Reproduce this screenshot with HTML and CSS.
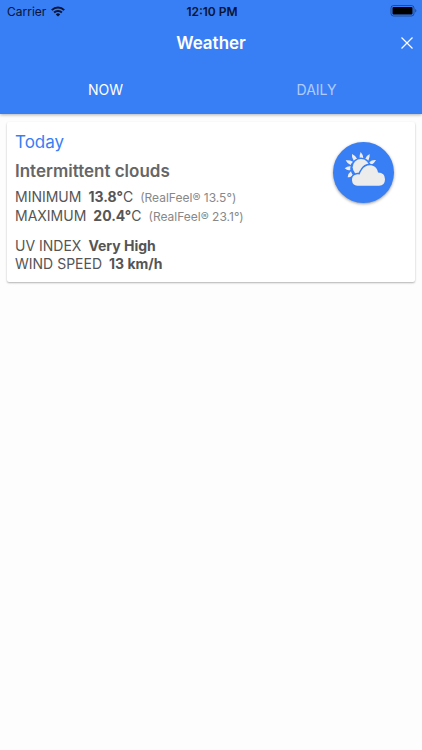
FILE: index.html
```html
<!DOCTYPE html>
<html lang="en">
<head>
<meta charset="utf-8">
<meta name="viewport" content="width=device-width, initial-scale=1">
<title>Weather</title>
<link rel="stylesheet" href="styles.css">
</head>
<body>
<header class="header">
  <div class="status">
    <div class="carrier">
      <span>Carrier</span>
      <svg class="wifi" viewBox="0 0 14 11" aria-hidden="true">
        <path d="M.8 4.100a8.800 8.800 0 0 1 12.400 0M3.100 6.500a5.600 5.600 0 0 1 7.800 0" fill="none" stroke="currentColor" stroke-width="2"/>
        <path d="M4.800 8.400a3.200 3.200 0 0 1 4.400 0L7 10.600z" fill="currentColor"/>
      </svg>
    </div>
    <span class="time">12:10 PM</span>
    <svg class="battery" viewBox="0 0 27 12" aria-hidden="true">
      <rect x="1" y=".5" width="23" height="10.500" rx="2.600" fill="none" stroke="#000" stroke-opacity=".4"/>
      <rect x="2.500" y="2" width="20" height="7.500" rx="1" fill="#000"/>
      <path d="M25.200 4v3.600c1.600-.6 1.600-3 0-3.600z" fill="#000" fill-opacity=".4"/>
    </svg>
  </div>
  <div class="titlebar">
    <h1 class="title">Weather</h1>
    <button class="close" type="button" aria-label="Close">
      <svg viewBox="0 0 12 12" aria-hidden="true"><path d="M.5.5l11 11M11.500.5l-11 11" fill="none" stroke="currentColor" stroke-width="1.200"/></svg>
    </button>
  </div>
  <nav class="tabs">
    <button class="tab tab-active" type="button">NOW</button>
    <button class="tab" type="button">DAILY</button>
  </nav>
</header>
<main class="content">
  <article class="card">
    <div class="details">
      <h2 class="day">Today</h2>
      <p class="summary">Intermittent clouds</p>
      <div class="group">
        <p class="row"><span>MINIMUM</span><span><b>13.8°</b>C</span><small>(RealFeel® 13.5°)</small></p>
        <p class="row"><span>MAXIMUM</span><span><b>20.4°</b>C</span><small>(RealFeel® 23.1°)</small></p>
      </div>
      <div class="group">
        <p class="row"><span>UV INDEX</span><b>Very High</b></p>
        <p class="row"><span>WIND SPEED</span><b>13 km/h</b></p>
      </div>
    </div>
    <svg class="icon" viewBox="39 36 183 183" aria-hidden="true">
      <g fill="#ececec">
        <circle cx="123" cy="112" r="25"/>
        <path d="M119 83q-1-8 3-17q8 9 8 18q-5-2-11-1z"/>
        <path d="M136 86q3-9 13-14q1 11-4 20q-3-4-9-6z"/>
        <path d="M148 97q7-8 20-7q-5 10-15 15q-2-5-5-8z"/>
        <path d="M101 92q-7-9-5-20q11 5 15 14q-6 2-10 6z"/>
        <path d="M92 105q-10-3-15-14q12-1 22 4q-5 4-7 10z"/>
        <path d="M91 120q-8 3-17-5q9-7 18-6q-2 5-1 11z"/>
        <path d="M98 134q-4 8-15 8q1-12 10-18q1 6 5 10z"/>
      </g>
      <path d="M112 167a17 17 0 0 1-3-33.500q4-1 10 0q2-7 7-14c12-20 44-18 48 8q21 1 21 20q0 18-18 19.500z" fill="#ececec" stroke="#387ef5" stroke-width="9" paint-order="stroke"/>
    </svg>
  </article>
</main>
</body>
</html>
```
FILE: styles.css
```css
* {
  box-sizing: border-box;
}

body {
  margin: 0;
  background: #fdfdfd;
  color: #555;
  font-family: Inter, "Liberation Sans", sans-serif;
  font-size: 14px;
}

h1, h2, p {
  margin: 0;
}

button {
  padding: 0;
  border: 0;
  background: none;
  color: inherit;
  font: inherit;
}

.header {
  background: #387ef5;
  color: #fff;
  box-shadow: 0 1px 3px rgba(0, 0, 0, 0.3);
}

.status {
  display: grid;
  grid-template-columns: 1fr auto 1fr;
  align-items: center;
  height: 22px;
  padding: 0 5px 0 7px;
  color: #0a1433;
  font-size: 12px;
}

.carrier {
  display: flex;
  align-items: center;
  gap: 5px;
}

.wifi {
  width: 14px;
  height: 11px;
}

.time {
  font-weight: 600;
}

.battery {
  justify-self: end;
  width: 27px;
  height: 12px;
}

.titlebar {
  display: grid;
  grid-template-columns: 1fr auto 1fr;
  align-items: center;
  height: 42px;
  padding: 0 9px;
}

.title {
  grid-column: 2;
  font-size: 17px;
  font-weight: 600;
}

.close {
  display: flex;
  justify-self: end;
}

.close svg {
  width: 12px;
  height: 12px;
}

.tabs {
  display: grid;
  grid-template-columns: 1fr 1fr;
  height: 50px;
}

.tab {
  font-size: 14px;
  opacity: 0.6;
}

.tab-active {
  opacity: 1;
}

.content {
  padding: 8px 7px;
}

.card {
  display: flex;
  align-items: flex-start;
  justify-content: space-between;
  padding: 8px 21px 9px 8px;
  border-radius: 2px;
  background: #fff;
  box-shadow: 0 1px 2px rgba(0, 0, 0, 0.3);
}

.details {
  display: flex;
  flex-direction: column;
}

.day {
  color: #387ef5;
  font-size: 17px;
  font-weight: 400;
  line-height: 24px;
}

.summary {
  margin: 4px 0;
  color: #666;
  font-size: 17px;
  font-weight: 600;
  line-height: 26px;
}

.group + .group {
  margin-top: 11px;
}

.row {
  display: flex;
  align-items: baseline;
  gap: 7px;
  font-size: 14px;
  line-height: 18px;
}

.row b {
  font-weight: 700;
}

.row small {
  color: #888;
  font-size: 12px;
}

.icon {
  flex: none;
  width: 61px;
  height: 61px;
  margin-top: 12px;
  border-radius: 50%;
  background: #387ef5;
  box-shadow: 0 1px 3px rgba(0, 0, 0, 0.4);
}
```
